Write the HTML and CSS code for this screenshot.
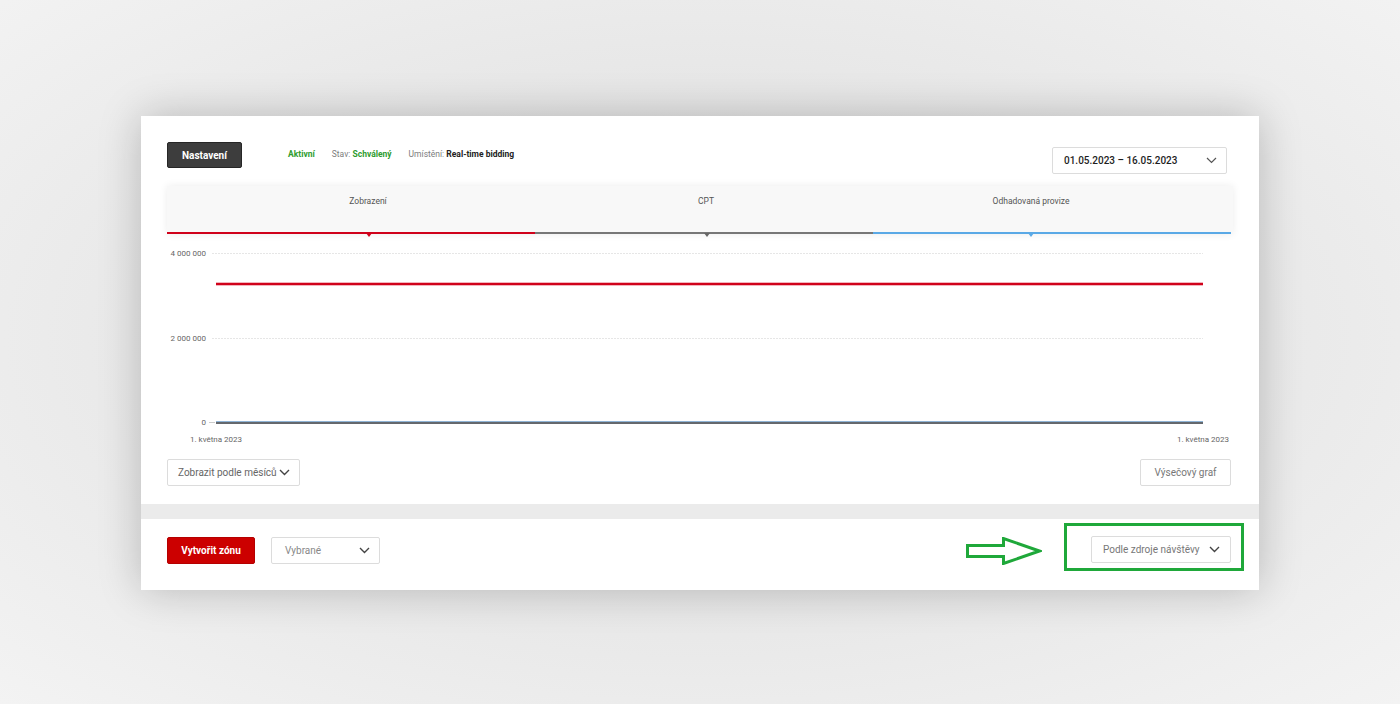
FILE: index.html
```html
<!DOCTYPE html>
<html lang="en">
<head>
    <meta charset="UTF-8">
    <meta name="viewport" content="width=device-width, initial-scale=1.0">
    <title>Statistiky webu</title>
    <link rel="stylesheet" href="styles.css">
</head>
<body>
    <div class="card">
        <div class="top">
            <div class="header">
                <div class="header-left">
                    <button class="btn-dark">Nastavení</button>
                    <div class="status">
                        <span class="green">Aktivní</span>
                        <span class="muted">Stav: <b class="green">Schválený</b></span>
                        <span class="muted">Umístění: <b class="dark">Real-time bidding</b></span>
                    </div>
                </div>
                <div class="select date-select">
                    <span>01.05.2023 – 16.05.2023</span>
                    <svg class="chev" width="11" height="7" viewBox="0 0 11 7"><path d="M1 1l4.5 4.5 4.5-4.5" fill="none" stroke="#555" stroke-width="1.2"/></svg>
                </div>
            </div>

            <div class="tabs">
                <div class="tab tab-red"><span>Zobrazení</span></div>
                <div class="tab tab-gray"><span>CPT</span></div>
                <div class="tab tab-blue"><span>Odhadovaná provize</span></div>
            </div>

            <svg class="chart" width="1064" height="210" viewBox="0 0 1064 210">
                <g class="axis-text">
                    <text x="39" y="15" text-anchor="end">4 000 000</text>
                    <text x="39" y="100" text-anchor="end">2 000 000</text>
                    <text x="39" y="184" text-anchor="end">0</text>
                    <text x="23" y="201">1. května 2023</text>
                    <text x="1062" y="201" text-anchor="end">1. května 2023</text>
                </g>
                <line x1="45" y1="12.5" x2="1036" y2="12.5" class="grid"/>
                <line x1="45" y1="97.5" x2="1036" y2="97.5" class="grid"/>
                <line x1="42" y1="181.5" x2="48" y2="181.5" stroke="#ccc" stroke-width="1"/>
                <line x1="49" y1="43" x2="1036" y2="43" stroke="#f3b5bd" stroke-width="4"/>
                <line x1="49" y1="43" x2="1036" y2="43" stroke="#d0021b" stroke-width="2"/>
                <line x1="49" y1="180.5" x2="1036" y2="180.5" stroke="#8fb4d6" stroke-width="1"/>
                <line x1="49" y1="182" x2="1036" y2="182" stroke="#64686d" stroke-width="2"/>
            </svg>

            <div class="chart-footer">
                <div class="select month-select">
                    <span>Zobrazit podle měsíců</span>
                    <svg class="chev" width="11" height="7" viewBox="0 0 11 7"><path d="M1 1l4.5 4.5 4.5-4.5" fill="none" stroke="#444" stroke-width="1.4"/></svg>
                </div>
                <button class="btn-light">Výsečový graf</button>
            </div>
        </div>

        <div class="divider"></div>

        <div class="bottom">
            <div class="bottom-left">
                <button class="btn-red">Vytvořit zónu</button>
                <div class="select pick-select">
                    <span>Vybrané</span>
                    <svg class="chev" width="11" height="7" viewBox="0 0 11 7"><path d="M1 1l4.5 4.5 4.5-4.5" fill="none" stroke="#444" stroke-width="1.4"/></svg>
                </div>
            </div>
            <div class="bottom-right">
                <svg class="arrow" width="76" height="28" viewBox="0 0 76 28">
                    <path d="M1.5 8.5h36v-7l36 12.5-36 12.5v-7h-36z" fill="none" stroke="#1fa83a" stroke-width="3" stroke-linejoin="miter"/>
                </svg>
                <div class="highlight">
                    <div class="select source-select">
                        <span>Podle zdroje návštěvy</span>
                        <svg class="chev" width="11" height="7" viewBox="0 0 11 7"><path d="M1 1l4.5 4.5 4.5-4.5" fill="none" stroke="#444" stroke-width="1.4"/></svg>
                    </div>
                </div>
            </div>
        </div>
    </div>
</body>
</html>
```

FILE: styles.css
```css
html, body {
    height: 100%;
}
body {
    margin: 0;
    font-family: Roboto, "Liberation Sans", Arial, sans-serif;
    background: radial-gradient(ellipse at 50% 48%, #dedede 0%, #e6e6e6 45%, #f3f3f3 100%);
    overflow: hidden;
}
.card {
    margin: 116px 0 0 141px;
    width: 1118px;
    height: 474px;
    background: #ffffff;
    box-shadow: 0 0 40px rgba(0, 0, 0, 0.22);
    display: flex;
    flex-direction: column;
}
.top {
    padding: 26px 28px 0 26px;
    height: 388px;
    box-sizing: border-box;
}
.header {
    display: flex;
    justify-content: space-between;
    align-items: flex-start;
    height: 44px;
}
.header-left {
    display: flex;
    align-items: center;
}
.btn-dark {
    width: 75px;
    height: 26px;
    background: #3d3d3d;
    border: 1px solid #262626;
    border-radius: 2px;
    color: #ffffff;
    font-family: inherit;
    font-size: 10px;
    font-weight: bold;
    padding: 0;
}
.status {
    display: flex;
    gap: 17px;
    margin-left: 46px;
    font-size: 8.5px;
    margin-top: -2px;
}
.status b {
    font-weight: bold;
}
.green {
    color: #2f9c2f;
    font-weight: bold;
}
.muted {
    color: #7d7d7d;
}
.dark {
    color: #222;
}
.select {
    display: flex;
    align-items: center;
    justify-content: space-between;
    border: 1px solid #dcdcdc;
    border-radius: 2px;
    box-sizing: border-box;
    height: 27px;
    padding: 0 10px;
    font-size: 10px;
    color: #777;
    background: #fff;
}
.date-select {
    margin-top: 5px;
    margin-right: 4px;
    width: 175px;
    color: #1e1e1e;
    font-weight: 500;
    padding: 0 9px 0 11px;
}
.tabs {
    display: flex;
    background: #f8f8f8;
    box-shadow: 0 0 8px rgba(0, 0, 0, 0.08);
    height: 48px;
    margin-right: -2px;
}
.tab {
    position: relative;
    box-sizing: border-box;
    border-bottom: 2px solid;
    font-size: 8.5px;
    color: #555;
    text-align: center;
    padding-top: 10px;
}
.tab::after {
    content: '';
    position: absolute;
    bottom: -5px;
    border-left: 3px solid transparent;
    border-right: 3px solid transparent;
    border-top: 4px solid;
}
.tab-red {
    width: 368px;
    border-color: #d0021b;
    padding-left: 34px;
}
.tab-red::after {
    left: 199px;
    border-top-color: #d0021b;
}
.tab-gray {
    width: 338px;
    border-color: #777;
    padding-left: 4px;
}
.tab-gray::after {
    left: 169px;
    border-top-color: #666;
}
.tab-blue {
    width: 358px;
    border-color: #5aa9e6;
    padding-right: 42px;
}
.tab-blue::after {
    left: 155px;
    border-top-color: #5aa9e6;
}
.chart {
    display: block;
    margin-top: 7px;
}
.axis-text text {
    font-size: 8px;
    fill: #666;
    font-family: Roboto, "Liberation Sans", Arial, sans-serif;
}
.grid {
    stroke: #e6e6e6;
    stroke-width: 1;
    stroke-dasharray: 2 1;
}
.chart-footer {
    display: flex;
    justify-content: space-between;
    margin-top: 8px;
}
.month-select {
    width: 133px;
    padding: 0 9px 0 10px;
    color: #666;
    white-space: nowrap;
}
.btn-light {
    width: 91px;
    height: 27px;
    border: 1px solid #dcdcdc;
    border-radius: 2px;
    background: #fff;
    color: #777;
    font-family: inherit;
    font-size: 10px;
    padding: 0;
}
.divider {
    height: 15px;
    background: #ebebeb;
}
.bottom {
    flex: 1;
    display: flex;
    justify-content: space-between;
    align-items: flex-start;
    padding: 0 28px 0 26px;
}
.bottom-left {
    display: flex;
    align-items: center;
    gap: 16px;
    margin-top: 18px;
}
.btn-red {
    width: 88px;
    height: 27px;
    background: #cc0000;
    border: 1px solid #b50000;
    border-radius: 2px;
    color: #fff;
    font-family: inherit;
    font-size: 10px;
    font-weight: bold;
    padding: 0;
}
.pick-select {
    width: 109px;
    color: #888;
    padding: 0 9px 0 13px;
}
.bottom-right {
    display: flex;
    align-items: center;
    margin-right: -13px;
    margin-top: 4px;
}
.arrow {
    display: block;
    margin-right: 22px;
    margin-top: 8px;
}
.highlight {
    border: 3px solid #1fa83a;
    padding: 10px 10px 5px 24px;
    height: 48px;
    box-sizing: border-box;
}
.source-select {
    width: 140px;
    color: #777;
    padding: 0 10px 0 11px;
}
```
